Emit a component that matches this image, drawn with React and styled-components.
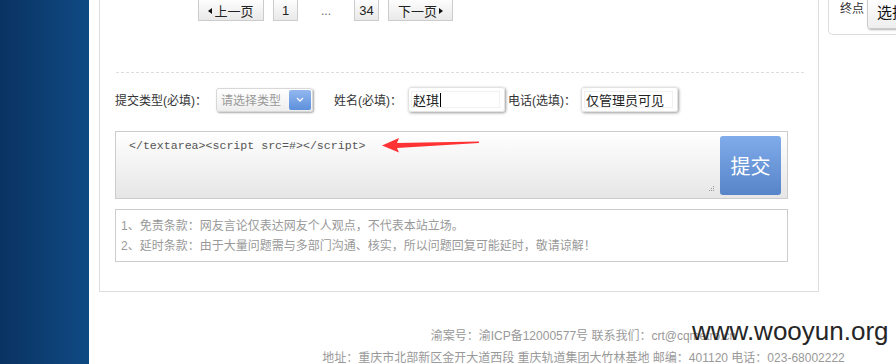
import React from 'react';
import styled, { createGlobalStyle } from 'styled-components';

const GlobalStyle = createGlobalStyle`
  *, *::before, *::after { box-sizing: border-box; }
  html, body { margin: 0; padding: 0; background: #fff; }
  body {
    font-family: "Liberation Sans", Arial, "Noto Sans CJK SC", sans-serif;
    font-size: 12px;
    color: #333;
  }
`;

const Page = styled.div`
  position: relative;
  display: flex;
  width: 896px;
  height: 364px;
  overflow: hidden;
`;

const BlueStrip = styled.div`
  flex: 0 0 89px;
  background: linear-gradient(to right, #0a3362, #0f4a84);
`;

const Column = styled.div`
  flex: 0 0 980px;
  margin-left: 10px;
  display: flex;
  flex-direction: column;
`;

const TopRow = styled.div`
  display: flex;
  align-items: flex-start;
`;

const MainPanel = styled.div`
  flex: 0 0 720px;
  height: 292px;
  border: 1px solid #ddd;
  border-top: none;
  display: flex;
  flex-direction: column;
`;

const Pager = styled.div`
  display: flex;
  align-items: center;
  gap: 9px;
  margin: -3px 0 0 98px;
  height: 24px;
`;

const PageBtn = styled.div`
  height: 24px;
  width: ${(p) => p.w}px;
  border: 1px solid #ccc;
  background: linear-gradient(#fff, #e9e9e9);
  display: flex;
  align-items: center;
  justify-content: center;
  gap: 2px;
  padding-top: 3px;
  font-size: 13px;
  color: #222;
`;

const Ellipsis = styled.span`
  width: 38px;
  text-align: center;
  padding-top: 3px;
  color: #666;
`;

const Tri = styled.span`
  width: 0;
  height: 0;
  border-top: 3px solid transparent;
  border-bottom: 3px solid transparent;
  ${(p) => (p.dir === 'left' ? 'border-right: 4px solid #111;' : 'border-left: 4px solid #111;')}
`;

const Dashed = styled.div`
  margin: 51px 0 0 16px;
  width: 688px;
  border-top: 1px dashed #ddd;
`;

const FormRow = styled.div`
  display: flex;
  align-items: center;
  height: 25px;
  margin: 14px 0 0 15px;
`;

const Label = styled.span`
  width: ${(p) => p.w}px;
  flex: 0 0 auto;
  font-size: 12px;
  color: #333;
  white-space: nowrap;
`;

const Select = styled.div`
  width: 97px;
  height: 24px;
  margin-right: 21px;
  border: 1px solid #d8d8d8;
  border-radius: 3px;
  background: linear-gradient(#fff, #eee);
  box-shadow: 1px 1px 2px rgba(0, 0, 0, 0.35);
  display: flex;
  align-items: center;
  justify-content: space-between;
  padding: 0 1px 0 4px;
  color: #999;
  font-size: 12px;
`;

const SelectArrow = styled.span`
  width: 22px;
  height: 20px;
  border-radius: 2px;
  background: linear-gradient(#93b8ef, #5d8fdb);
  display: flex;
  align-items: center;
  justify-content: center;
`;

const Field = styled.div`
  width: 97px;
  height: 25px;
  margin-right: ${(p) => p.mr || 0}px;
  border: 1px solid #e2e2e2;
  border-radius: 3px;
  box-shadow: 1px 1px 3px rgba(0, 0, 0, 0.4);
  padding: 3px 4px 3px 2px;
`;

const FieldInner = styled.div`
  height: 100%;
  border: 1px solid #f1f1f1;
  display: flex;
  align-items: center;
  padding-left: 1px;
  font-size: 13px;
  color: #222;
  white-space: nowrap;
`;

const Caret = styled.span`
  width: 1px;
  height: 14px;
  background: #000;
  margin-left: 1px;
`;

const Composer = styled.div`
  display: flex;
  width: 673px;
  height: 68px;
  margin: 19px 0 0 15px;
  border: 1px solid #ccc;
  background: linear-gradient(#fff, #e6e6e6);
`;

const TextArea = styled.div`
  position: relative;
  flex: 1;
  height: 100%;
  padding: 5px 0 0 13px;
`;

const TextLine = styled.div`
  display: flex;
  align-items: center;
  height: 16px;
`;

const Code = styled.span`
  font-family: "Liberation Mono", "Courier New", monospace;
  font-size: 11.6px;
  color: #555;
`;

const Grip = styled.svg`
  position: absolute;
  right: 5px;
  bottom: 5px;
`;

const Submit = styled.button`
  width: 61px;
  height: 59px;
  margin: 4px 6px 3px 0;
  border: none;
  border-radius: 3px;
  background: linear-gradient(#80aceb, #5784c8);
  color: #fff;
  font-family: "Noto Sans CJK SC", sans-serif;
  font-size: 20px;
  padding: 0;
`;

const Notice = styled.div`
  width: 673px;
  height: 53px;
  margin: 10px 0 0 15px;
  border: 1px solid #ccc;
  padding: 6px 0 0 5px;
`;

const NoticeLine = styled.div`
  line-height: 20px;
  font-size: 12px;
  color: #999;
  white-space: nowrap;
`;

const Sidebar = styled.div`
  flex: 0 0 252px;
  margin-left: 9px;
  height: 35px;
  border-left: 1px solid #ddd;
  border-bottom: 1px solid #ddd;
  border-bottom-left-radius: 5px;
  display: flex;
  align-items: flex-start;
  padding-left: 11px;
`;

const SideLabel = styled.span`
  font-size: 12px;
  color: #333;
  margin-top: 2px;
  line-height: 14px;
`;

const SideBtn = styled.div`
  margin: -4px 0 0 3px;
  height: 33px;
  padding: 4px 9px 0 9px;
  border: 1px solid #ccc;
  border-radius: 3px;
  background: linear-gradient(#fff, #eee);
  box-shadow: 1px 1px 2px rgba(0, 0, 0, 0.3);
  font-size: 15px;
  color: #111;
  white-space: nowrap;
`;

const Footer = styled.div`
  margin-top: 33px;
  text-align: center;
  font-size: 12px;
  color: #999;
`;

const FooterLine = styled.div`
  line-height: 22px;
  white-space: nowrap;
  margin-left: -12px;
`;

const Watermark = styled.div`
  position: absolute;
  left: 692px;
  top: 318px;
  font-family: "Liberation Sans", Arial, sans-serif;
  font-size: 26px;
  line-height: 26px;
  color: #262626;
  white-space: nowrap;
`;

function Arrow() {
  return (
    <svg width="98" height="16" viewBox="0 0 98 16" style={{ marginLeft: 16 }}>
      <polygon points="0,8.5 17,1 15,6 97,4.5 97,6 15,11 17,15.5" fill="#f33" />
    </svg>
  );
}

export default function App() {
  return (
    <>
      <GlobalStyle />
      <Page>
        <BlueStrip />
        <Column>
          <TopRow>
            <MainPanel>
              <Pager>
                <PageBtn w={66}>
                  <Tri dir="left" />
                  上一页
                </PageBtn>
                <PageBtn w={25}>1</PageBtn>
                <Ellipsis>...</Ellipsis>
                <PageBtn w={25}>34</PageBtn>
                <PageBtn w={65}>
                  下一页
                  <Tri dir="right" />
                </PageBtn>
              </Pager>
              <Dashed />
              <FormRow>
                <Label w={101}>提交类型(必填)：</Label>
                <Select>
                  请选择类型
                  <SelectArrow>
                    <svg width="8" height="5" viewBox="0 0 8 5">
                      <polyline points="1,1 4,4 7,1" fill="none" stroke="#fff" strokeWidth="1.3" />
                    </svg>
                  </SelectArrow>
                </Select>
                <Label w={74}>姓名(必填)：</Label>
                <Field mr={3}>
                  <FieldInner>
                    赵琪
                    <Caret />
                  </FieldInner>
                </Field>
                <Label w={73}>电话(选填)：</Label>
                <Field>
                  <FieldInner>仅管理员可见</FieldInner>
                </Field>
              </FormRow>
              <Composer>
                <TextArea>
                  <TextLine>
                    <Code>{'</textarea><script src=#></script>'}</Code>
                    <Arrow />
                  </TextLine>
                  <Grip width="7" height="7" viewBox="0 0 7 7">
                    <rect x="5" y="0" width="1" height="1" fill="#999" />
                    <rect x="3" y="2" width="1" height="1" fill="#999" />
                    <rect x="5" y="2" width="1" height="1" fill="#999" />
                    <rect x="1" y="4" width="1" height="1" fill="#999" />
                    <rect x="3" y="4" width="1" height="1" fill="#999" />
                    <rect x="5" y="4" width="1" height="1" fill="#999" />
                  </Grip>
                </TextArea>
                <Submit>提交</Submit>
              </Composer>
              <Notice>
                <NoticeLine>1、免责条款：网友言论仅表达网友个人观点，不代表本站立场。</NoticeLine>
                <NoticeLine>2、延时条款：由于大量问题需与多部门沟通、核实，所以问题回复可能延时，敬请谅解！</NoticeLine>
              </Notice>
            </MainPanel>
            <Sidebar>
              <SideLabel>终点</SideLabel>
              <SideBtn>选择</SideBtn>
            </Sidebar>
          </TopRow>
          <Footer>
            <FooterLine>渝案号：渝ICP备12000577号 联系我们：crt@cqmetro.cn</FooterLine>
            <FooterLine>地址：重庆市北部新区金开大道西段 重庆轨道集团大竹林基地 邮编：401120 电话：023-68002222</FooterLine>
          </Footer>
        </Column>
        <Watermark>www.wooyun.org</Watermark>
      </Page>
    </>
  );
}
